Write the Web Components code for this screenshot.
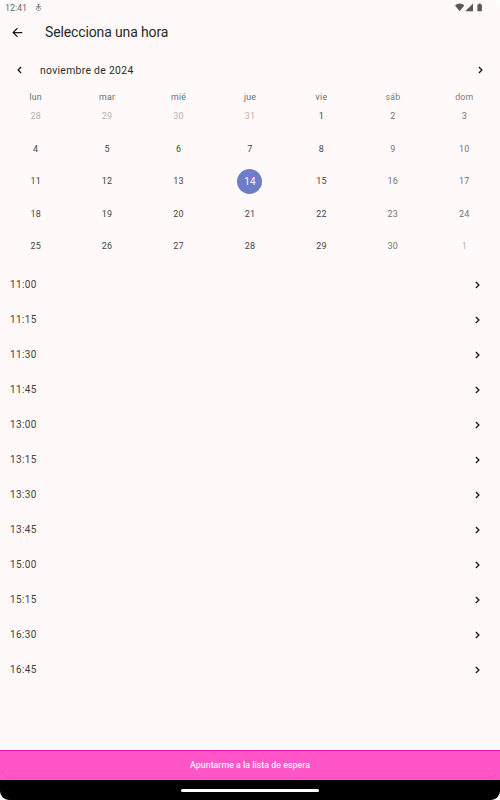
<!DOCTYPE html>
<html lang="es">
<head>
<meta charset="utf-8">
<title>Selecciona una hora</title>
<style>
  html { background: #fff; }
  body { margin: 0; font-family: Roboto, sans-serif; color: #2e2b2b; }
</style>
</head>
<body>
<booking-screen>
  <status-bar time="12:41"></status-bar>
  <app-bar>Selecciona una hora</app-bar>
  <month-calendar label="noviembre de 2024" selected="14"></month-calendar>
  <time-list times="11:00 11:15 11:30 11:45 13:00 13:15 13:30 13:45 15:00 15:15 16:30 16:45"></time-list>
  <wait-button slot="footer">Apuntarme a la lista de espera</wait-button>
  <nav-bar slot="footer"></nav-bar>
</booking-screen>

<script>
// attaches the shadow root and fills it
function render(el, html) {
  el.attachShadow({ mode: 'open' }).innerHTML = html;
}

class BookingScreen extends HTMLElement {
  constructor() {
    super();
    render(this, `
      <style>
        :host {
          display: flex; flex-direction: column; width: 500px; height: 800px;
          background: #fffaf9; border-radius: 9px; overflow: hidden;
        }
        main { flex: 1; min-height: 0; }
      </style>
      <main><slot></slot></main>
      <slot name="footer"></slot>
    `);
  }
}

class StatusBar extends HTMLElement {
  constructor() {
    super();
    render(this, `
      <style>
        :host {
          display: flex; align-items: center; height: 15px; padding: 0 16px 0 5px;
          font-size: 9px; line-height: 15px; letter-spacing: -.1px; color: #6c6969;
        }
        span { padding-top: 2px; line-height: 13px; }
        .debug { margin-left: 8px; }
        .right { margin-left: auto; }
        svg { display: block; }
      </style>
      <span>${this.getAttribute('time')}</span>
      <svg class="debug" width="7" height="9" viewBox="0 0 7 9" fill="none" stroke="#7b7878" stroke-width=".8">
        <path d="M3.5 .8v4.4M2.2 1.6h2.6M.9 3.5h5.2M2.2 4.3l1.3 1.5 1.3-1.5M1.2 5c0 3.4 4.6 3.4 4.6 0"/>
      </svg>
      <svg class="right" width="29" height="9" viewBox="0 0 29 9" fill="#5a5757">
        <path d="M0 2.6C2.6-.2 6.8-.2 9.3 2.6L4.65 8.3z"/>
        <path d="M18 .5v7.8h-7.8z"/>
        <path d="M22.4 1.4h1.2V.4h2v1h1.3v6.9h-4.5z"/>
      </svg>
    `);
  }
}

class AppBar extends HTMLElement {
  constructor() {
    super();
    render(this, `
      <style>
        :host {
          display: flex; align-items: center; height: 35px; padding-left: 12px; gap: 22px;
          font-size: 14px; line-height: 20px; letter-spacing: -.13px; color: #2a2727;
        }
        svg { display: block; }
        span { padding-bottom: 2px; }
      </style>
      <svg width="11" height="11" viewBox="0 0 11 11" fill="none" stroke="#1b1818" stroke-width="1.25">
        <path d="M10.3 5.5H1.2M5.5 1.1L1.1 5.5l4.4 4.4"/>
      </svg>
      <span><slot></slot></span>
    `);
  }
}

class ChevronIcon extends HTMLElement {
  constructor() {
    super();
    render(this, `
      <style>
        :host { display: block; width: 5px; height: 8px; }
        :host([left]) { transform: scaleX(-1); }
        svg { display: block; }
      </style>
      <svg width="5" height="8" viewBox="0 0 5 8" fill="none" stroke="#1b1818" stroke-width="1.3">
        <path d="M.9 1L3.9 4 .9 7"/>
      </svg>
    `);
  }
}

class MonthCalendar extends HTMLElement {
  constructor() {
    super();
    const names = ['lun', 'mar', 'mié', 'jue', 'vie', 'sáb', 'dom'];
    const selected = this.getAttribute('selected');
    let cells = '';
    for (let i = 0; i < 35; i++) {
      const n = i - 3;   // the 1st falls on a friday
      const day = n < 1 ? n + 31 : n > 30 ? n - 30 : n;
      let cls = i % 7 > 4 ? 'weekend' : '';
      if (n < 1 || n > 30) cls = 'outside';
      else if (String(n) === selected) cls = 'selected';
      cells += `<span class="day ${cls}">${day}</span>`;
    }
    render(this, `
      <style>
        :host { display: block; }
        header { display: flex; align-items: center; height: 40px; padding: 0 17px; }
        h2 { margin: 0 auto 0 18px; padding-top: 1px; font-size: 10.4px; font-weight: 400; letter-spacing: .3px; line-height: 16px; }
        .names, .days { display: grid; grid-template-columns: repeat(7, 1fr); text-align: center; }
        .names { font-size: 8.8px; line-height: 14px; letter-spacing: .2px; color: #6b6969; }
        .names span:nth-child(n+6) { color: #7c7a7a; }
        .days { grid-auto-rows: 32.5px; font-size: 9px; letter-spacing: .2px; place-items: center; margin-top: -3.3px; color: #454343; }
        .day { width: 25px; height: 25px; line-height: 25px; border-radius: 50%; }
        .weekend { color: #767474; }
        .outside { color: #b6b2b2; }
        .selected { background: #6e7dc9; color: #fafaff; font-size: 10px; letter-spacing: 0; }
      </style>
      <header>
        <chevron-icon left></chevron-icon>
        <h2>${this.getAttribute('label')}</h2>
        <chevron-icon></chevron-icon>
      </header>
      <div class="names">${names.map(n => `<span>${n}</span>`).join('')}</div>
      <div class="days">${cells}</div>
    `);
  }
}

class TimeList extends HTMLElement {
  constructor() {
    super();
    const rows = this.getAttribute('times').split(' ')
      .map(t => `<li><span>${t}</span><chevron-icon></chevron-icon></li>`).join('');
    render(this, `
      <style>
        :host { display: block; padding-top: 4.3px; }
        ul { margin: 0; padding: 0; list-style: none; }
        li {
          display: flex; align-items: center; justify-content: space-between;
          height: 35px; padding: 0 20px 0 10px;
          font-size: 10px; letter-spacing: .35px; color: #444141;
        }
        span { padding-bottom: 1px; }
      </style>
      <ul>${rows}</ul>
    `);
  }
}

class WaitButton extends HTMLElement {
  constructor() {
    super();
    render(this, `
      <style>
        :host { display: block; background: #ff55c8; }
        button {
          display: block; box-sizing: border-box; width: 100%; height: 30px; padding: 0 0 1px;
          border: 0; border-top: 1px solid #ee12b5; background: none;
          font: 500 8.85px/27px Roboto, sans-serif; color: #ffeffa;
        }
        /* thin shade that follows the rounded lower edge */
        .edge { height: 28px; margin-top: -30px; margin-bottom: 2px; box-sizing: border-box; border-bottom: 1px solid #ec4fba; border-radius: 0 0 12px 12px; }
      </style>
      <button><slot></slot></button>
      <div class="edge"></div>
    `);
  }
}

class NavBar extends HTMLElement {
  constructor() {
    super();
    render(this, `
      <style>
        :host { display: flex; align-items: center; justify-content: center; height: 20px; background: #000; }
        i { width: 138px; height: 3px; border-radius: 2px; background: #fff; }
      </style>
      <i></i>
    `);
  }
}

customElements.define('chevron-icon', ChevronIcon);
customElements.define('booking-screen', BookingScreen);
customElements.define('status-bar', StatusBar);
customElements.define('app-bar', AppBar);
customElements.define('month-calendar', MonthCalendar);
customElements.define('time-list', TimeList);
customElements.define('wait-button', WaitButton);
customElements.define('nav-bar', NavBar);
</script>
</body>
</html>
